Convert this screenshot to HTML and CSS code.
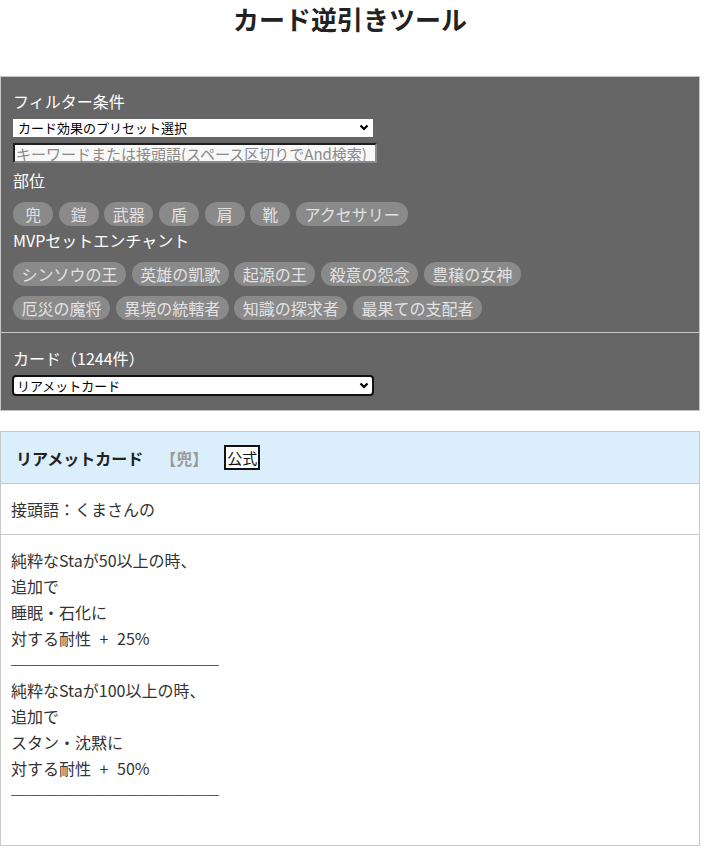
FILE: index.html
```html
<!DOCTYPE html>
<html lang="ja">
<head>
<meta charset="utf-8">
<title>カード逆引きツール</title>
<link rel="stylesheet" href="styles.css">
</head>
<body>
<div class="page">
  <h1 class="title">カード逆引きツール</h1>
  <div class="panel">
    <div class="filter">
      <div class="label">フィルター条件</div>
      <div class="select-wrap preset-wrap">
        <select class="preset"><option>カード効果のプリセット選択</option></select>
        <svg class="chevron" width="10" height="7" viewBox="0 0 10 7"><path d="M1.5 1.5 L5 5 L8.5 1.5" fill="none" stroke="#000" stroke-width="2.2"/></svg>
      </div>
      <input class="keyword" type="text" placeholder="キーワードまたは接頭語(スペース区切りでAnd検索)">
      <div class="label label-part">部位</div>
      <div class="tags tags-first">
        <span class="tag">兜</span><span class="tag">鎧</span><span class="tag">武器</span><span class="tag">盾</span><span class="tag">肩</span><span class="tag">靴</span><span class="tag">アクセサリー</span>
      </div>
      <div class="label label-mvp">MVPセットエンチャント</div>
      <div class="tags tags-first">
        <span class="tag">シンソウの王</span><span class="tag">英雄の凱歌</span><span class="tag">起源の王</span><span class="tag">殺意の怨念</span><span class="tag">豊穣の女神</span>
      </div>
      <div class="tags tags-next">
        <span class="tag">厄災の魔将</span><span class="tag">異境の統轄者</span><span class="tag">知識の探求者</span><span class="tag">最果ての支配者</span>
      </div>
    </div>
    <div class="cards">
      <div class="label">カード（1244件）</div>
      <div class="select-wrap card-wrap">
        <select class="card-select"><option>リアメットカード</option></select>
        <svg class="chevron" width="10" height="7" viewBox="0 0 10 7"><path d="M1.5 1.5 L5 5 L8.5 1.5" fill="none" stroke="#000" stroke-width="2.2"/></svg>
      </div>
    </div>
  </div>
  <div class="card">
    <div class="card-head">
      <span class="card-name">リアメットカード</span>
      <span class="card-slot">【兜】</span>
      <span class="official">公式</span>
    </div>
    <div class="card-row">接頭語：くまさんの</div>
    <div class="card-effect">純粋なStaが50以上の時、<br>追加で<br>睡眠・石化に<br>対する耐性 + 25%<br><span class="rule">─────────────</span><br>純粋なStaが100以上の時、<br>追加で<br>スタン・沈黙に<br>対する耐性 + 50%<br><span class="rule">─────────────</span><br>&nbsp;</div>
  </div>
</div>
</body>
</html>
```

FILE: styles.css
```css
* {
  box-sizing: border-box;
}

body {
  margin: 0;
  background: #ffffff;
  color: #333333;
  font-family: "Noto Sans CJK JP", "Noto Sans", sans-serif;
  font-size: 16px;
}

.page {
  width: 700px;
}

.title {
  margin: 0 0 40px;
  padding-top: 1px;
  font-size: 26px;
  line-height: 35px;
  font-weight: 700;
  text-align: center;
  color: #222222;
}

.panel {
  background: #666666;
  border: 1px solid #c4c4c4;
  color: #ffffff;
}

.filter {
  padding: 12px 12px 12px;
  border-bottom: 1px solid #c4c4c4;
}

.cards {
  padding: 13px 12px 14px;
}

.label {
  font-size: 16px;
  line-height: 24px;
}

.label-part {
  margin-top: 5px;
}

.label-mvp {
  margin-top: 2px;
}

.select-wrap {
  position: relative;
}

.chevron {
  position: absolute;
  top: 50%;
  margin-top: -4px;
  pointer-events: none;
}

.preset-wrap {
  margin-top: 6px;
  width: 360px;
  height: 18px;
}

.preset-wrap .chevron {
  right: 4px;
}

.preset {
  display: block;
  width: 100%;
  height: 18px;
  padding: 0 5px;
  border: none;
  background: #ffffff;
  color: #000000;
  font-family: "Noto Sans CJK JP", sans-serif;
  font-size: 13px;
  line-height: 18px;
  -webkit-appearance: none;
  appearance: none;
}

.keyword {
  display: block;
  margin-top: 6px;
  width: 364px;
  height: 20px;
  padding: 0 1px;
  border-style: solid;
  border-width: 2px;
  border-color: #1e1e1e #8a8a8a #8a8a8a #1e1e1e;
  background: #f8f8f8;
  font-family: "Noto Sans CJK JP", sans-serif;
  font-size: 15px;
}

.keyword::placeholder {
  color: #8a8a8a;
}

.tags {
  display: flex;
  gap: 5.67px;
}

.tags-first {
  margin-top: 10px;
}

.tags-next {
  margin-top: 10px;
}

.tag {
  min-width: 40px;
  height: 24px;
  padding: 0 8.5px;
  border-radius: 12px;
  background: #8a8a8a;
  color: #e2e2e2;
  font-size: 16px;
  line-height: 24px;
  text-align: center;
  white-space: nowrap;
}

.card-wrap {
  margin: 5px 0 0 -1px;
  width: 362px;
  height: 21px;
}

.card-wrap .chevron {
  right: 5px;
}

.card-select {
  display: block;
  width: 100%;
  height: 21px;
  padding: 0 3px;
  border: 2px solid #111111;
  border-radius: 4px;
  background: #ffffff;
  color: #000000;
  font-family: "Noto Sans CJK JP", sans-serif;
  font-size: 13px;
  line-height: 17px;
  -webkit-appearance: none;
  appearance: none;
}

.card {
  margin-top: 20px;
  border: 1px solid #c8c8c8;
}

.card-head {
  display: flex;
  align-items: center;
  padding: 12px 15px;
  height: 52px;
  background: #dbeefc;
  border-bottom: 1px solid #c8c8c8;
}

.card-name {
  font-weight: 700;
  font-size: 16px;
  color: #222222;
}

.card-slot {
  margin-left: 17px;
  font-weight: 700;
  font-size: 16px;
  color: #999999;
}

.official {
  margin-left: 16px;
  padding: 0 1px;
  border: 2px solid #111111;
  background: #ffffff;
  color: #111111;
  font-size: 15px;
  line-height: 21px;
}

.card-row {
  padding: 12px 10px;
  line-height: 26px;
  border-bottom: 1px solid #c8c8c8;
}

.card-effect {
  padding: 12px 10px;
  line-height: 26px;
  word-spacing: 5px;
}

.rule {
  letter-spacing: 0;
  word-spacing: 0;
}
```
